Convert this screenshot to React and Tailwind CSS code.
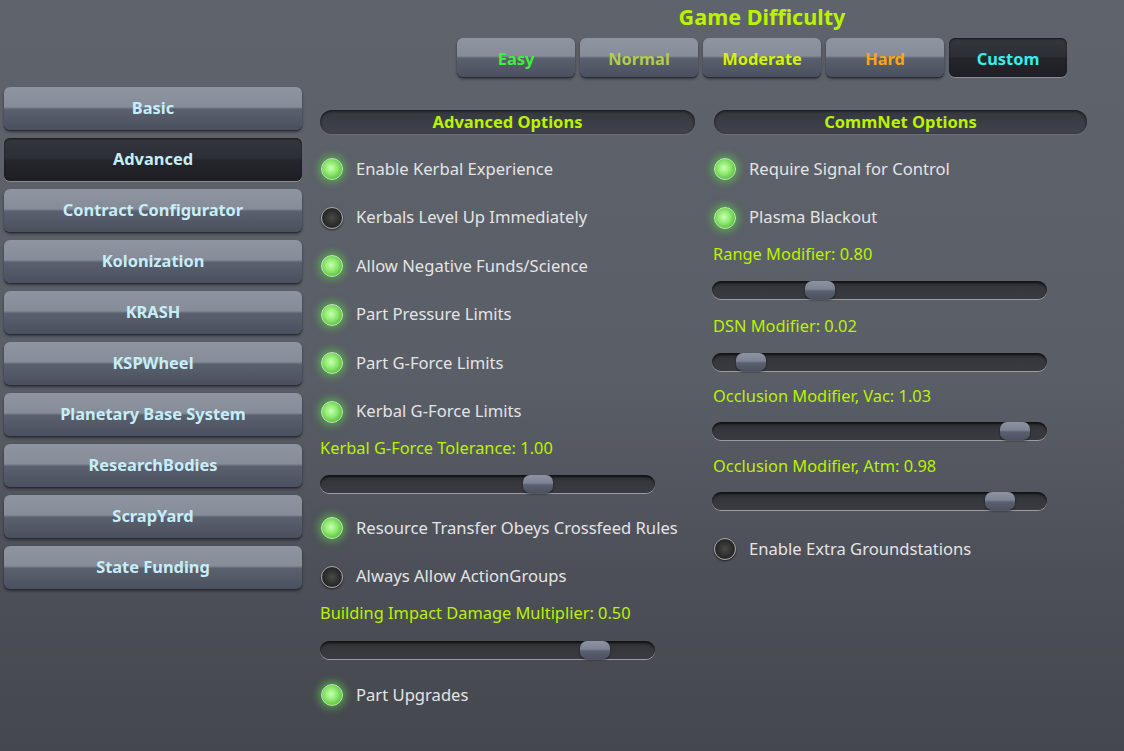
const FONT = { fontFamily: '"Noto Sans", "Open Sans", sans-serif' };

const btnBase =
  'flex items-center justify-center rounded-[6px] font-bold shadow-[0_1px_0_#2a2c32,0_2px_3px_rgba(0,0,0,0.45)]';
const btnIdle =
  'bg-[linear-gradient(to_bottom,#8f94a1_0%,#878c99_46%,#5b606e_52%,#4b5060_100%)]';
const btnActive =
  'bg-[linear-gradient(to_bottom,#33363d_0%,#2c2f35_46%,#24262b_52%,#1d1f24_100%)] shadow-[inset_0_1px_2px_rgba(0,0,0,0.6),0_1px_0_#8a8d95]';

const difficulties = [
  { name: 'Easy', color: 'text-[#3cf03c]' },
  { name: 'Normal', color: 'text-[#b3cc4e]' },
  { name: 'Moderate', color: 'text-[#d6f200]' },
  { name: 'Hard', color: 'text-[#ffa414]' },
  { name: 'Custom', color: 'text-[#36eef0]', active: true },
];

const sections = [
  'Basic',
  'Advanced',
  'Contract Configurator',
  'Kolonization',
  'KRASH',
  'KSPWheel',
  'Planetary Base System',
  'ResearchBodies',
  'ScrapYard',
  'State Funding',
];

function Header({ children }) {
  return (
    <div className="flex h-[24px] items-center justify-center rounded-full bg-[linear-gradient(to_bottom,#34373e,#40434b)] text-[16.5px] font-bold text-[#baf200] shadow-[inset_0_1px_3px_rgba(0,0,0,0.7),0_1px_0_#6d7078]">
      {children}
    </div>
  );
}

function Toggle({ on, label, className = '' }) {
  return (
    <div className={`flex h-[48.5px] items-center ${className}`}>
      <span
        className={
          on
            ? 'ml-[1px] h-[22px] w-[22px] shrink-0 rounded-full border border-[#c8e8c0] bg-[radial-gradient(circle_at_45%_45%,#c8ffb4_0%,#8fe96f_40%,#4ebd36_80%,#2f8a22_100%)] shadow-[0_0_7px_3px_rgba(90,210,70,0.55)]'
            : 'ml-[1px] h-[22px] w-[22px] shrink-0 rounded-full border border-[#a8a8a8] bg-[radial-gradient(circle_at_50%_50%,#4a4a4a_0%,#2c2c2c_55%,#1a1a1a_100%)] shadow-[0_1px_2px_rgba(0,0,0,0.6)]'
        }
      />
      <span className="ml-[13px] text-[16.6px] text-[#e4e4e4]">{label}</span>
    </div>
  );
}

function Label({ children, className = '' }) {
  return (
    <div className={`h-[20px] text-[16.4px] leading-[20px] text-[#baf200] ${className}`}>
      {children}
    </div>
  );
}

function Slider({ pos, className = '' }) {
  return (
    <div
      className={`relative h-[18px] w-[335px] rounded-full bg-[linear-gradient(to_bottom,#2a2b30_0%,#36373c_40%,#3a3b40_100%)] shadow-[inset_0_2px_2px_rgba(0,0,0,0.6),0_1px_0_#9a9ca2] ${className}`}
    >
      <div
        className="absolute top-0 h-[18px] w-[30px] rounded-[7px] bg-[linear-gradient(to_bottom,#8d93a2_0%,#7d8392_45%,#5a6070_55%,#4c5262_100%)] shadow-[0_1px_2px_rgba(0,0,0,0.6)]"
        style={{ left: pos }}
      />
    </div>
  );
}

export default function App() {
  return (
    <div
      className="h-[751px] w-[1124px] overflow-hidden bg-[linear-gradient(to_bottom,#5f636c_0%,#5a5e67_50%,#4d5058_75%,#45474e_100%)]"
      style={FONT}
    >
      {/* Difficulty */}
      <div className="ml-[457px] w-[610px] pt-[3px]">
        <div className="h-[28px] text-center text-[21.6px] font-bold leading-[28px] text-[#baf200]">
          Game Difficulty
        </div>
        <div className="mt-[7px] flex gap-[5px]">
          {difficulties.map((d) => (
            <div
              key={d.name}
              className={`${btnBase} h-[39px] w-[118px] pt-[3px] text-[16.4px] ${d.color} ${d.active ? btnActive : btnIdle}`}
            >
              {d.name}
            </div>
          ))}
        </div>
      </div>

      <div className="mt-[10px] flex">
        {/* Sidebar */}
        <div className="ml-[4px] flex w-[298px] flex-col gap-[8px]">
          {sections.map((s) => (
            <div
              key={s}
              className={`${btnBase} h-[43px] text-[16.4px] text-[#c6eef8] ${s === 'Advanced' ? btnActive : btnIdle}`}
            >
              {s}
            </div>
          ))}
        </div>

        {/* Advanced options */}
        <div className="ml-[18px] w-[375px] pt-[23px]">
          <Header>Advanced Options</Header>
          <div className="mt-[11px]">
            <Toggle on label="Enable Kerbal Experience" />
            <Toggle label="Kerbals Level Up Immediately" />
            <Toggle on label="Allow Negative Funds/Science" />
            <Toggle on label="Part Pressure Limits" />
            <Toggle on label="Part G-Force Limits" />
            <Toggle on label="Kerbal G-Force Limits" />
          </div>
          <Label className="mt-[2px]">Kerbal G-Force Tolerance: 1.00</Label>
          <Slider pos={203} className="mt-[17px]" />
          <div className="mt-[11px]">
            <Toggle on label="Resource Transfer Obeys Crossfeed Rules" />
            <Toggle label="Always Allow ActionGroups" />
          </div>
          <Label className="mt-[2px]">Building Impact Damage Multiplier: 0.50</Label>
          <Slider pos={260} className="mt-[18px]" />
          <Toggle on label="Part Upgrades" className="mt-[12px]" />
        </div>

        {/* CommNet */}
        <div className="ml-[17px] w-[375px] pt-[23px]">
          <div className="ml-[2px] w-[373px]">
            <Header>CommNet Options</Header>
          </div>
          <div className="ml-[1px] mt-[11px]">
            <Toggle on label="Require Signal for Control" />
            <Toggle on label="Plasma Blackout" />
          </div>
          <Label className="ml-[1px] mt-[2px]">Range Modifier: 0.80</Label>
          <Slider pos={93} className="mt-[17px]" />
          <Label className="ml-[1px] mt-[17px]">DSN Modifier: 0.02</Label>
          <Slider pos={24} className="mt-[17px]" />
          <Label className="ml-[1px] mt-[15px]">Occlusion Modifier, Vac: 1.03</Label>
          <Slider pos={288} className="mt-[16px]" />
          <Label className="ml-[1px] mt-[16px]">Occlusion Modifier, Atm: 0.98</Label>
          <Slider pos={273} className="mt-[16px]" />
          <Toggle label="Enable Extra Groundstations" className="ml-[1px] mt-[15px]" />
        </div>
      </div>
    </div>
  );
}
